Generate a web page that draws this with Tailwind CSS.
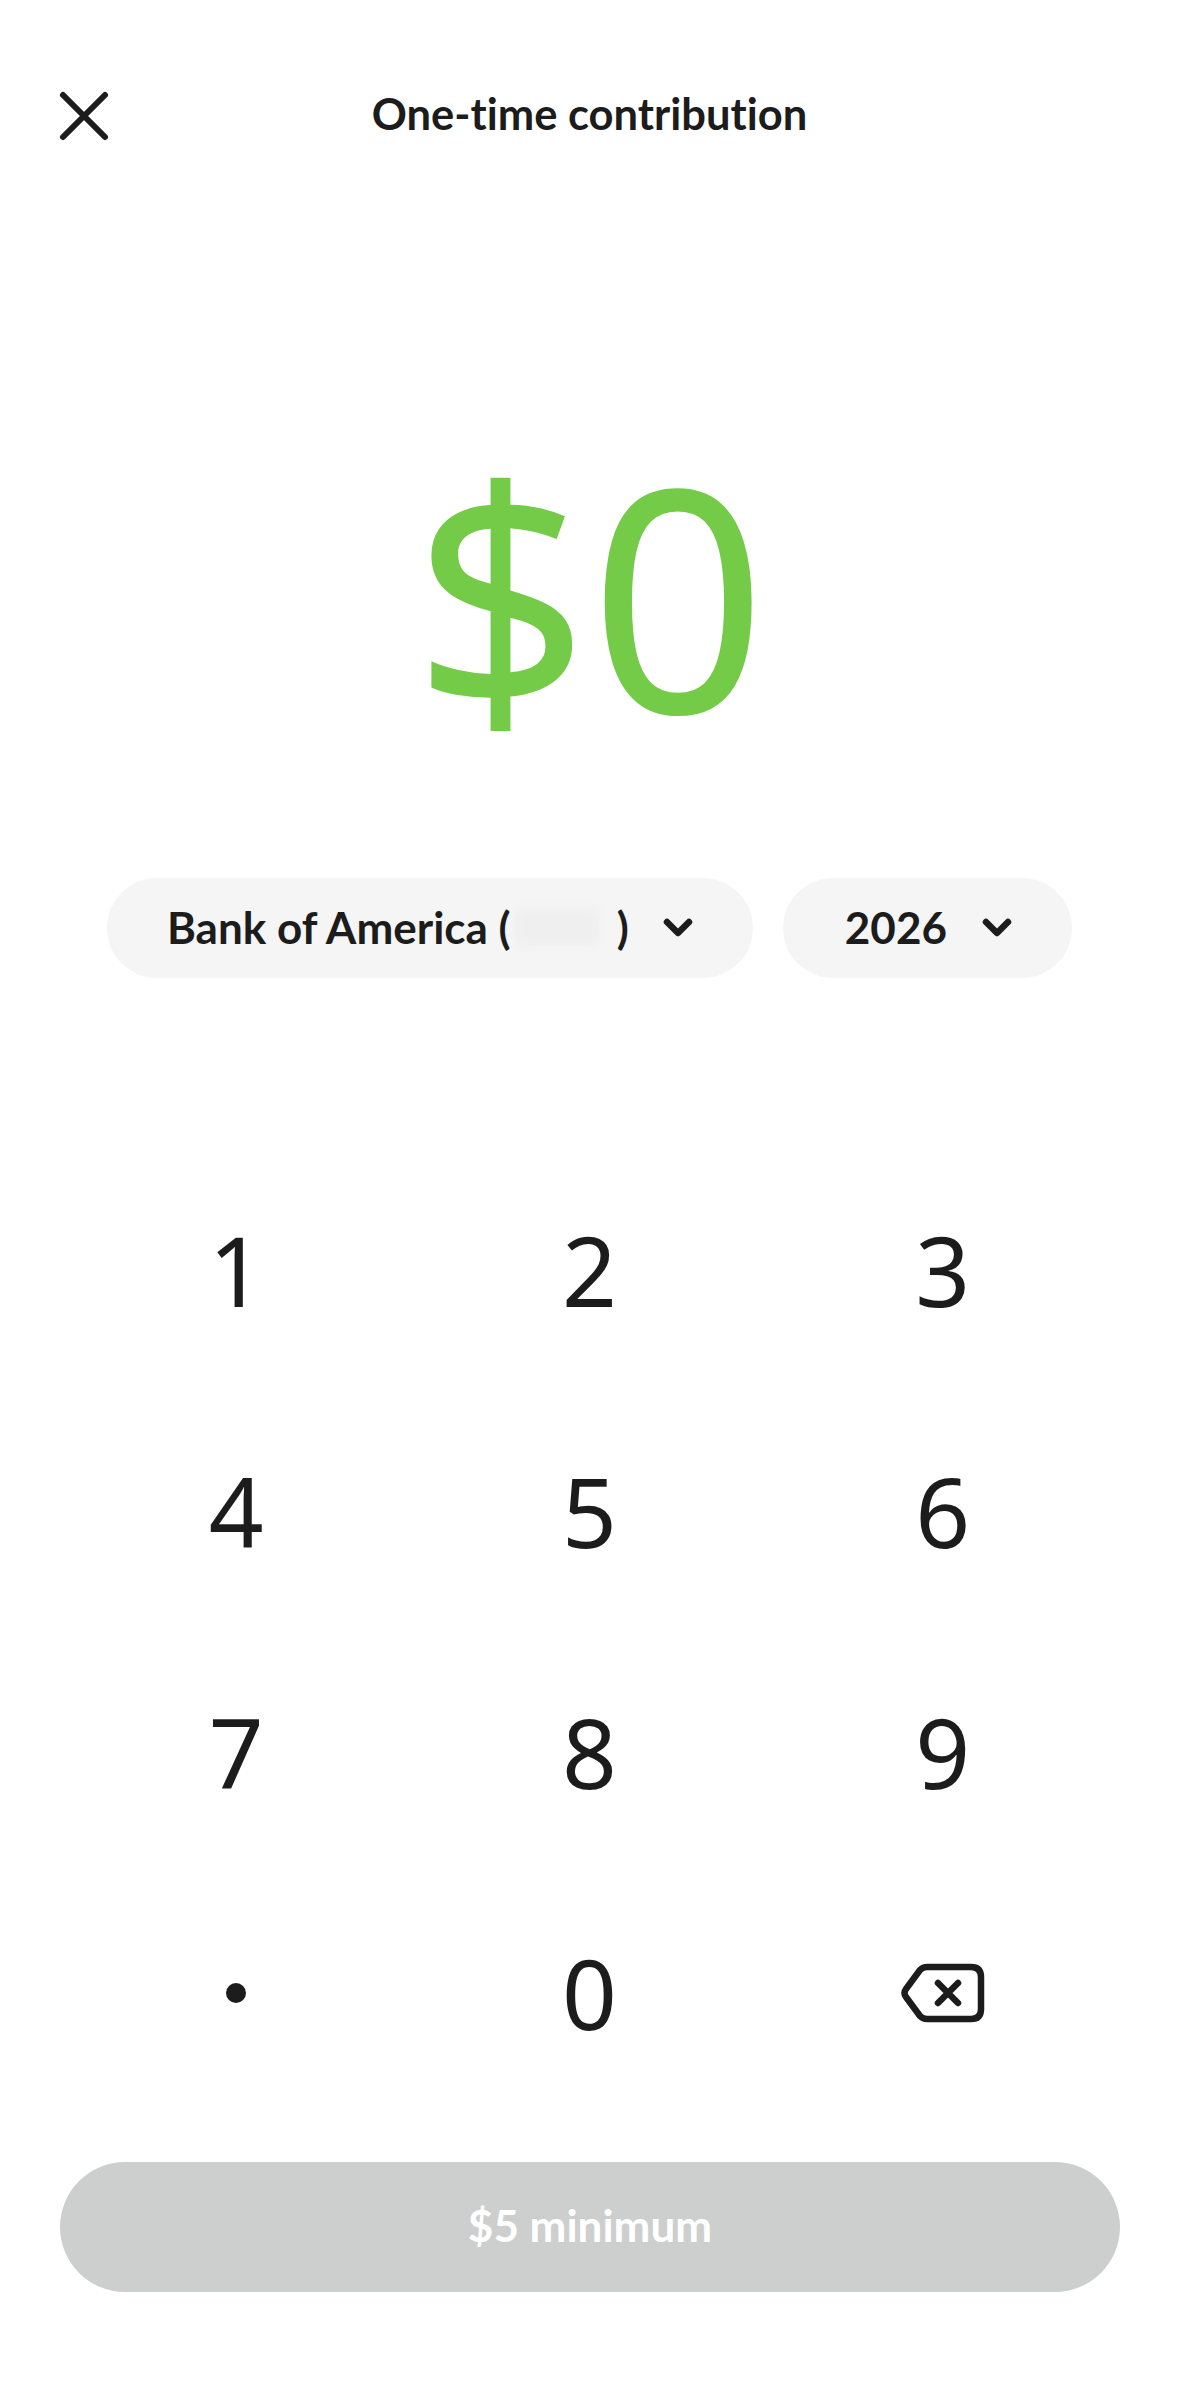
<!DOCTYPE html>
<html lang="en">
<head>
    <meta charset="UTF-8">
    <meta name="viewport" content="width=device-width, initial-scale=1.0">
    <title>One-time contribution</title>
    <script src="https://cdn.jsdelivr.net/npm/@tailwindcss/browser@4"></script>
</head>
<body class="bg-white min-h-screen font-['Lato',sans-serif] text-[#1c1c1c] [font-variant-ligatures:none]">
    <div class="w-[1179px] h-[2396px] flex flex-col overflow-hidden">
        <!-- Header -->
        <div class="relative h-[70px] mt-[80px] flex items-center justify-center">
            <svg class="absolute left-[54px] top-[6px] w-[60px] h-[60px]" viewBox="0 0 60 60" fill="none" stroke="#1c1c1c" stroke-width="6" stroke-linecap="round">
                <path d="M9 9 51 51M51 9 9 51"/>
            </svg>
            <h1 class="text-[43.5px] font-bold leading-none -mt-[3px]">One-time contribution</h1>
        </div>

        <!-- Amount -->
        <div class="h-[300px] mt-[293px] flex items-center justify-center text-[#73cb48] text-[310px] font-normal leading-none font-['Noto_Sans',sans-serif]">
            <span>$0</span>
        </div>

        <!-- Account and year pickers -->
        <div class="mt-[135px] px-[107px] flex gap-[30px] text-[44px] font-bold">
            <button class="w-[648px] h-[100px] rounded-[50px] bg-[#f5f5f5] flex items-center pl-[60px] pb-[3px]">
                <span>Bank of America (</span>
                <span class="ml-[4px] w-[84px] h-[36px] rounded-md bg-[#efefef] blur-[4px]"></span>
                <span class="ml-[18px]">)</span>
                <svg class="ml-[32px] w-[34px] h-[24px]" viewBox="0 0 34 24" fill="none" stroke="#1c1c1c" stroke-width="6.5" stroke-linecap="round" stroke-linejoin="round">
                    <path d="M6 7 17 18 28 7"/>
                </svg>
            </button>
            <button class="w-[290px] h-[100px] rounded-[50px] bg-[#f5f5f5] flex items-center pl-[62px] pb-[3px]">
                <span>2026</span>
                <svg class="ml-[33px] w-[34px] h-[24px]" viewBox="0 0 34 24" fill="none" stroke="#1c1c1c" stroke-width="6.5" stroke-linecap="round" stroke-linejoin="round">
                    <path d="M6 7 17 18 28 7"/>
                </svg>
            </button>
        </div>

        <!-- Keypad -->
        <div class="mt-[171px] w-[1060px] mx-auto grid grid-cols-3 auto-rows-[241px] text-[96px] font-[440] leading-none font-['Noto_Sans',sans-serif]">
            <div class="flex items-center justify-center">1</div>
            <div class="flex items-center justify-center">2</div>
            <div class="flex items-center justify-center">3</div>
            <div class="flex items-center justify-center">4</div>
            <div class="flex items-center justify-center">5</div>
            <div class="flex items-center justify-center">6</div>
            <div class="flex items-center justify-center">7</div>
            <div class="flex items-center justify-center">8</div>
            <div class="flex items-center justify-center">9</div>
            <div class="flex items-center justify-center">
                <span class="w-[20px] h-[20px] rounded-full bg-[#1c1c1c]"></span>
            </div>
            <div class="flex items-center justify-center">0</div>
            <div class="flex items-center justify-center">
                <svg class="w-[84px] h-[60px]" viewBox="0 0 84 60" fill="none" stroke="#1c1c1c" stroke-width="6.5" stroke-linecap="round" stroke-linejoin="round">
                    <path d="M26 4H70Q80 4 80 14V46Q80 56 70 56H26Q22 56 19 53L5 34Q2 30 5 26L19 7Q22 4 26 4Z"/>
                    <path d="M37 20 57 40M57 20 37 40"/>
                </svg>
            </div>
        </div>

        <!-- Submit -->
        <div class="mt-[49px] pl-[60px] pr-[59px]">
            <button class="w-full h-[130px] rounded-[65px] bg-[#cdcfce] text-white text-[44px] font-bold flex items-center justify-center pb-[4px]">$5 minimum</button>
        </div>
    </div>
</body>
</html>
